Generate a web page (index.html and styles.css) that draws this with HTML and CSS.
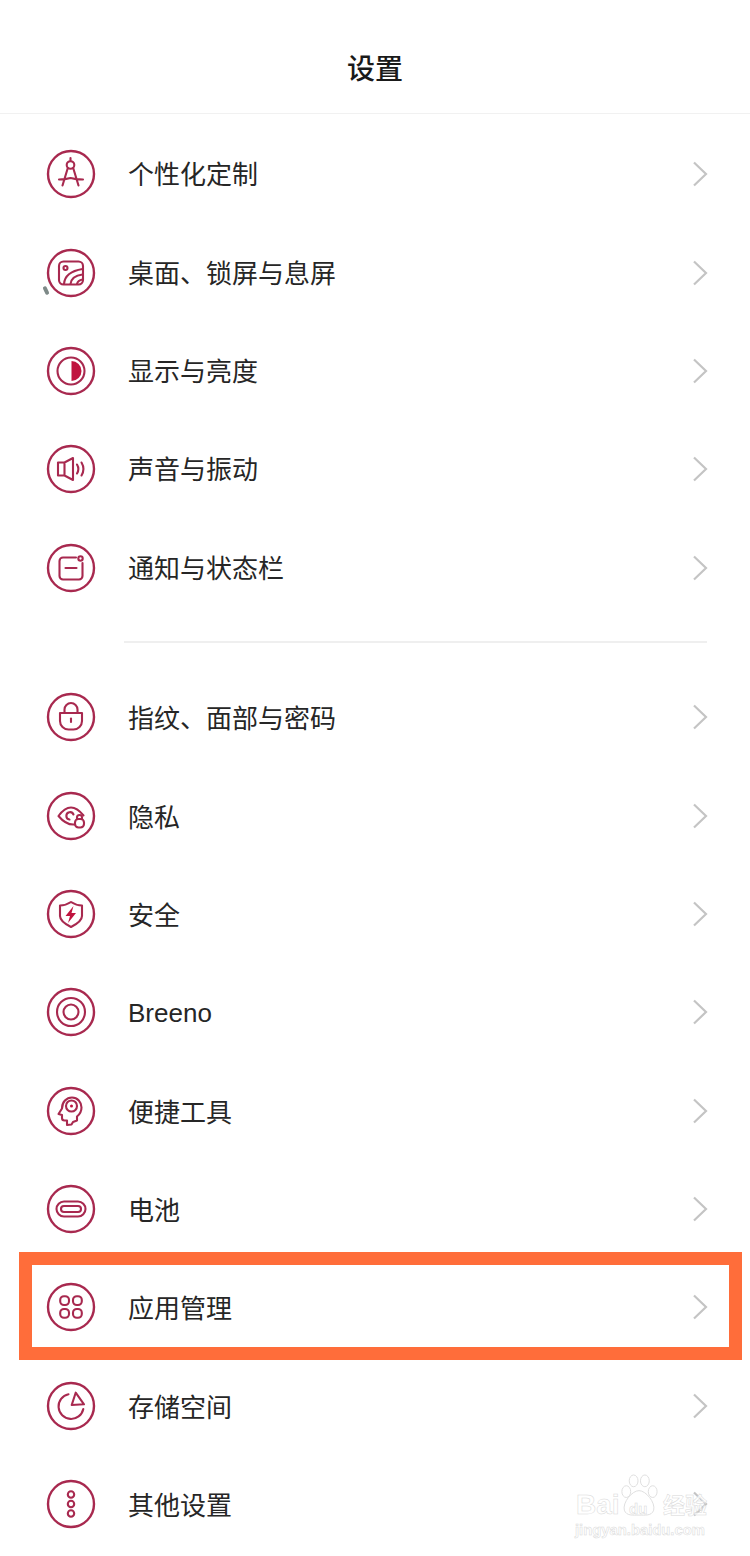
FILE: index.html
```html
<!DOCTYPE html>
<html lang="zh-CN">
<head>
<meta charset="utf-8">
<title>设置</title>
<link rel="stylesheet" href="styles.css">
</head>
<body>
<svg class="defs" width="0" height="0" aria-hidden="true">
  <defs>
    <symbol id="chev" viewBox="0 0 16 26"><path d="M2 1.5 14 13 2 24.5"/></symbol>
  </defs>
</svg>
<div class="page">
  <header class="top"><h1 class="title">设置</h1></header>
  <main>
    <section class="group">
      <div class="row">
        <svg class="ico" viewBox="0 0 50 50"><circle class="ring" cx="25" cy="25" r="23"/><circle cx="24.5" cy="16" r="3.8"/><path d="M24.500 9v3M21.800 19 16.500 36.500M27.200 19 32.500 36.500M13 30.500c4 0 8-.5 11.500-1.500M37 30.500c-4 0-9-.5-12.500-1.500"/></svg>
        <span class="label">个性化定制</span>
        <svg class="chev"><use href="#chev"/></svg>
        <i class="speck"></i>
      </div>
      <div class="row">
        <svg class="ico" viewBox="0 0 50 50"><circle class="ring" cx="25" cy="25" r="23"/><rect x="13" y="13.500" width="24" height="23" rx="4.500"/><circle cx="19.500" cy="20" r="2"/><path d="M18 36c.5-7 6-13 18.500-15M24.500 36c.5-4.500 4.500-8.500 12-9.500M31 36c.5-2 2.500-4 5.500-4.500"/></svg>
        <span class="label">桌面、锁屏与息屏</span>
        <svg class="chev"><use href="#chev"/></svg>
      </div>
      <div class="row">
        <svg class="ico" viewBox="0 0 50 50"><circle class="ring" cx="25" cy="25" r="23"/><circle cx="25" cy="25" r="13.500"/><path class="solid" d="M25.500 15a10 10 0 0 1 0 20z"/></svg>
        <span class="label">显示与亮度</span>
        <svg class="chev"><use href="#chev"/></svg>
      </div>
      <div class="row">
        <svg class="ico" viewBox="0 0 50 50"><circle class="ring" cx="25" cy="25" r="23"/><path d="M12 18.500h6.500v13H12zM18.500 18.500 27 14v22l-8.500-4.500"/><path d="M31 20.500c1.700 2.800 1.700 6.200 0 9M35.500 18.500c2.500 4.200 2.500 8.800 0 13"/></svg>
        <span class="label">声音与振动</span>
        <svg class="chev"><use href="#chev"/></svg>
      </div>
      <div class="row">
        <svg class="ico" viewBox="0 0 50 50"><circle class="ring" cx="25" cy="25" r="23"/><path d="M30 14.500H17a3.500 3.500 0 0 0-3.500 3.500v15a3.500 3.500 0 0 0 3.500 3.500h16a3.500 3.500 0 0 0 3.500-3.500V20"/><circle cx="34.500" cy="15.500" r="2.200"/><path d="M19.500 25h11"/></svg>
        <span class="label">通知与状态栏</span>
        <svg class="chev"><use href="#chev"/></svg>
      </div>
    </section>
    <hr class="divider">
    <section class="group group-b">
      <div class="row">
        <svg class="ico" viewBox="0 0 50 50"><circle class="ring" cx="25" cy="25" r="23"/><path d="M18.500 21v-3.500a6.500 6.500 0 0 1 13 0V21"/><path d="M14 21h22v8a8.500 8.500 0 0 1-8.500 8.500h-5A8.500 8.500 0 0 1 14 29z"/><path d="M25 26.500v3.500"/></svg>
        <span class="label">指纹、面部与密码</span>
        <svg class="chev"><use href="#chev"/></svg>
      </div>
      <div class="row">
        <svg class="ico" viewBox="0 0 50 50"><circle class="ring" cx="25" cy="25" r="23"/><path d="M28.500 33.500c-5.500.5-11-2.500-16-8.500 4-5.500 8.500-8.500 12.500-8.500s8.500 3 12.500 8"/><path d="M27.500 23.500a3.700 3.700 0 1 0-4 5"/><rect x="29" y="28" width="9" height="8.500" rx="3.500"/><path d="M31 28v-1.500a2.500 2.500 0 0 1 5 0V28"/></svg>
        <span class="label">隐私</span>
        <svg class="chev"><use href="#chev"/></svg>
      </div>
      <div class="row">
        <svg class="ico" viewBox="0 0 50 50"><circle class="ring" cx="25" cy="25" r="23"/><path d="M14 16.500c4 0 8-1.500 11-3.500 3 2 7 3.500 11 3.500V27c0 4.500-5 8-11 11-6-3-11-6.500-11-11z"/><path class="solid" d="M27.500 17 19.500 27h4.500l-2 7 8-10h-4.500z"/></svg>
        <span class="label">安全</span>
        <svg class="chev"><use href="#chev"/></svg>
      </div>
      <div class="row">
        <svg class="ico" viewBox="0 0 50 50"><circle class="ring" cx="25" cy="25" r="23"/><circle cx="25" cy="25" r="14"/><circle cx="25" cy="25" r="7.500"/></svg>
        <span class="label latin">Breeno</span>
        <svg class="chev"><use href="#chev"/></svg>
      </div>
      <div class="row">
        <svg class="ico" viewBox="0 0 50 50"><circle class="ring" cx="25" cy="25" r="23"/><path d="M21 39v-4.500h-2.500c-1.500 0-2.500-1-2.500-2.500v-3l-3.500-1 3.500-5.500c0-6.500 4.500-11 10-11s9.500 4.500 9.500 10c0 4.500-2 7-4.500 9v4l-4 1.500-1.500 2.500z"/><circle cx="25.500" cy="20" r="5.500"/><circle class="solid" cx="25.500" cy="20" r="1.500"/></svg>
        <span class="label">便捷工具</span>
        <svg class="chev"><use href="#chev"/></svg>
      </div>
      <div class="row">
        <svg class="ico" viewBox="0 0 50 50"><circle class="ring" cx="25" cy="25" r="23"/><rect x="10.500" y="17.500" width="29" height="15" rx="7.500"/><rect x="15" y="22" width="20" height="6" rx="3"/></svg>
        <span class="label">电池</span>
        <svg class="chev"><use href="#chev"/></svg>
      </div>
      <div class="row">
        <svg class="ico" viewBox="0 0 50 50"><circle class="ring" cx="25" cy="25" r="23"/><rect x="14.200" y="14.200" width="8.800" height="8.800" rx="3.800"/><rect x="27" y="14.200" width="8.800" height="8.800" rx="3.800"/><rect x="14.200" y="27" width="8.800" height="8.800" rx="3.800"/><rect x="27" y="27" width="8.800" height="8.800" rx="3.800"/></svg>
        <span class="label">应用管理</span>
        <svg class="chev"><use href="#chev"/></svg>
        <i class="mark"></i>
      </div>
      <div class="row">
        <svg class="ico" viewBox="0 0 50 50"><circle class="ring" cx="25" cy="25" r="23"/><path d="M22.500 13.200A12.500 12.500 0 1 0 37.300 28"/><path d="M29.700 11.700 38 23.300 25.700 24z"/></svg>
        <span class="label">存储空间</span>
        <svg class="chev"><use href="#chev"/></svg>
      </div>
      <div class="row">
        <svg class="ico" viewBox="0 0 50 50"><circle class="ring" cx="25" cy="25" r="23"/><circle cx="25" cy="15.500" r="3.200"/><circle cx="25" cy="25" r="3.200"/><circle cx="25" cy="34.500" r="3.200"/></svg>
        <span class="label">其他设置</span>
        <svg class="chev"><use href="#chev"/></svg>
        <div class="wm">
          <svg class="wm-paw" viewBox="0 0 40 46"><ellipse cx="7" cy="18" rx="4.500" ry="6"/><ellipse cx="14.500" cy="7" rx="4.500" ry="6"/><ellipse cx="26" cy="7" rx="4.500" ry="6"/><ellipse cx="34" cy="18" rx="4.500" ry="6"/><path d="M20 17c7 0 17 12 15 20-2 6-9 5-15 5s-13 1-15-5c-2-8 8-20 15-20z"/></svg>
          <span class="wm-bai">Bai</span><span class="wm-du">du</span><span class="wm-cn">经验</span>
          <span class="wm-url">jingyan.baidu.com</span>
        </div>
      </div>
    </section>
  </main>
</div>
</body>
</html>
```

FILE: styles.css
```css
* { box-sizing: border-box; }
html, body { margin: 0; padding: 0; background: #fff; }
body {
  font-family: "Noto Sans CJK SC", "Liberation Sans", sans-serif;
  color: #222;
}
.defs { position: absolute; }
.page { width: 750px; height: 1556px; overflow: hidden; }

.top {
  height: 114px;
  border-bottom: 1px solid #f1f1f1;
  display: flex;
  align-items: center;
  justify-content: center;
  padding-top: 20px;
}
.title { margin: 0; font-size: 28px; font-weight: 500; line-height: 40px; color: #1a1a1a; }

main { padding-top: 11px; }
.row {
  position: relative;
  height: 98.4px;
  display: flex;
  align-items: center;
  padding: 0 42px 0 46px;
}
.ico {
  width: 50px;
  height: 50px;
  flex: none;
  fill: none;
  stroke: #a8294f;
  stroke-width: 2.1;
  stroke-linejoin: round;
  stroke-linecap: round;
}
.ico .ring { stroke-width: 2.4; }
.ico .solid { fill: #c0143f; stroke: none; }
.label {
  margin-left: 32px;
  flex: 1;
  font-size: 26px;
  line-height: 36px;
  padding-bottom: 2px;
  color: #262626;
}
.group-b .label { padding-bottom: 0; }
.group-b .latin {
  font-family: "Liberation Sans", sans-serif;
  padding-top: 2px;
}
.chev {
  width: 16px;
  height: 26px;
  flex: none;
  fill: none;
  stroke: #c4c4c4;
  stroke-width: 2.2;
}
.divider {
  height: 2px;
  border: 0;
  margin: 24px 43px 25px 124px;
  background: #efefef;
}
.mark {
  position: absolute;
  left: 19px;
  right: 8px;
  top: -6px;
  bottom: -3px;
  border: 13px solid #ff6d3a;
  pointer-events: none;
}
.speck {
  position: absolute;
  left: 44px;
  top: 161px;
  width: 4px;
  height: 9px;
  border-radius: 2px;
  background: #7e8a88;
  transform: rotate(-25deg);
}

.wm {
  position: absolute;
  left: 575px;
  top: 0;
  width: 136px;
  height: 90px;
  color: rgba(255, 255, 255, 0.75);
  -webkit-text-stroke: 0.5px #d8d8d8;
}
.wm-paw {
  position: absolute;
  left: 44px;
  top: 19px;
  width: 40px;
  height: 45px;
  fill: #fff;
  stroke: #dedede;
  stroke-width: 1;
}
.wm-bai, .wm-du, .wm-cn, .wm-url {
  position: absolute;
  font-family: "Liberation Sans", "Noto Sans CJK SC", sans-serif;
  font-weight: 700;
  white-space: nowrap;
}
.wm-bai { left: 1px; top: 35px; font-size: 28px; line-height: 30px; }
.wm-du { left: 54px; top: 46px; font-size: 15px; line-height: 16px; }
.wm-cn { left: 88px; top: 39px; font-size: 22px; line-height: 24px; }
.wm-url { left: 0; top: 66px; font-size: 14.800px; line-height: 18px; }
```
